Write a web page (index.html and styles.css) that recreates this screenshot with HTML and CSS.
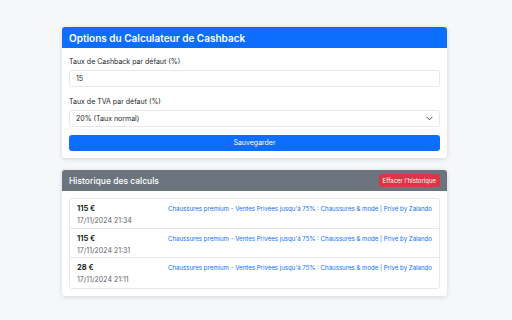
FILE: index.html
```html
<!DOCTYPE html>
<html lang="fr">
<head>
    <meta charset="UTF-8">
    <meta name="viewport" content="width=device-width, initial-scale=1.0">
    <title>Options du Calculateur de Cashback</title>
    <link rel="stylesheet" href="styles.css">
</head>
<body>
    <div class="wrapper">
        <!-- Options card -->
        <div class="card">
            <div class="card-header header-primary">
                <h1>Options du Calculateur de Cashback</h1>
            </div>
            <div class="card-body">
                <div class="form-group">
                    <label for="cashbackRate">Taux de Cashback par défaut (%)</label>
                    <input type="number" id="cashbackRate" value="15">
                </div>
                <div class="form-group">
                    <label for="vatRate">Taux de TVA par défaut (%)</label>
                    <div class="select-wrap">
                        <select id="vatRate">
                            <option value="20">20% (Taux normal)</option>
                            <option value="10">10% (Taux intermédiaire)</option>
                            <option value="5.5">5,5% (Taux réduit)</option>
                        </select>
                        <svg class="chevron" width="7" height="7" viewBox="0 0 16 16"><path d="M2 5l6 6 6-6" fill="none" stroke="#343a40" stroke-width="2" stroke-linecap="round" stroke-linejoin="round"/></svg>
                    </div>
                </div>
                <button class="btn btn-primary">Sauvegarder</button>
            </div>
        </div>

        <!-- History card -->
        <div class="card">
            <div class="card-header header-secondary">
                <h2>Historique des calculs</h2>
                <button class="btn-small btn-danger">Effacer l'historique</button>
            </div>
            <div class="card-body">
                <ul class="list-group">
                    <li class="list-item">
                        <div>
                            <div class="amount">115 €</div>
                            <div class="date">17/11/2024 21:34</div>
                        </div>
                        <a href="#">Chaussures premium - Ventes Privées jusqu'à 75% : Chaussures &amp; mode | Privé by Zalando</a>
                    </li>
                    <li class="list-item">
                        <div>
                            <div class="amount">115 €</div>
                            <div class="date">17/11/2024 21:31</div>
                        </div>
                        <a href="#">Chaussures premium - Ventes Privées jusqu'à 75% : Chaussures &amp; mode | Privé by Zalando</a>
                    </li>
                    <li class="list-item">
                        <div>
                            <div class="amount">28 €</div>
                            <div class="date">17/11/2024 21:11</div>
                        </div>
                        <a href="#">Chaussures premium - Ventes Privées jusqu'à 75% : Chaussures &amp; mode | Privé by Zalando</a>
                    </li>
                </ul>
            </div>
        </div>
    </div>
</body>
</html>
```
FILE: styles.css
```css
/* Page font and background */
body {
    margin: 0;
    font-family: Inter, "Liberation Sans", sans-serif;
    font-size: 7px;
    color: #212529;
    background-color: #f6f7f9;
}
/* Holds the two cards */
.wrapper {
    width: 385px;
    margin: 27px auto 0 62px;
}
/* Card box */
.card {
    background: white;
    border-radius: 3px;
    box-shadow: 0 1px 5px rgba(0, 0, 0, 0.14);
    overflow: hidden;
    margin-bottom: 12px;
}
.card-header {
    height: 21px;
    padding: 0 7px;
    display: flex;
    align-items: center;
    justify-content: space-between;
    color: white;
}
.header-primary {
    background-color: #0d6efd;
}
.header-secondary {
    background-color: #6c757d;
}
h1, h2 {
    margin: 0;
    font-weight: 600;
    white-space: nowrap;
}
h1 {
    font-size: 10px;
}
h2 {
    font-size: 8.5px;
    font-weight: 500;
}
.card-body {
    padding: 7px;
}
/* Form fields */
.form-group {
    margin-bottom: 8px;
}
label {
    display: block;
    line-height: 11px;
    margin-bottom: 3px;
    padding-top: 1px;
}
input, select {
    display: block;
    box-sizing: border-box;
    width: 100%;
    height: 17px;
    padding: 0 6px;
    font-family: inherit;
    font-size: 7px;
    color: #212529;
    background: white;
    border: 1px solid #e6e8eb;
    border-radius: 3px;
    outline: none;
}
select {
    height: 16.5px;
    appearance: none;
}
.select-wrap {
    position: relative;
}
.chevron {
    position: absolute;
    right: 7px;
    top: 5px;
}
/* Buttons */
.btn {
    display: block;
    width: 100%;
    height: 16.5px;
    border: none;
    border-radius: 3px;
    font-family: inherit;
    font-size: 7px;
    color: white;
    cursor: pointer;
}
.btn-primary {
    background-color: #0d6efd;
}
.btn-small {
    height: 13.5px;
    padding: 0 4px;
    border: none;
    border-radius: 2px;
    font-family: inherit;
    font-size: 6px;
    color: white;
    cursor: pointer;
}
.btn-danger {
    background-color: #dc3545;
}
/* History list */
.list-group {
    list-style: none;
    margin: 0;
    padding: 0;
    border: 1px solid #e6e8eb;
    border-radius: 3px;
}
.list-item {
    display: flex;
    justify-content: space-between;
    align-items: flex-start;
    height: 29.5px;
    box-sizing: border-box;
    padding: 5px 7px 0;
    border-bottom: 1px solid #e6e8eb;
}
.list-item:last-child {
    border-bottom: none;
}
.amount {
    font-weight: 700;
    font-size: 7.5px;
    line-height: 10px;
}
.date {
    line-height: 13px;
    color: #5c636a;
    white-space: nowrap;
}
a {
    color: #0d6efd;
    font-size: 6.1px;
    text-decoration: none;
    line-height: 10px;
    white-space: nowrap;
}
```
